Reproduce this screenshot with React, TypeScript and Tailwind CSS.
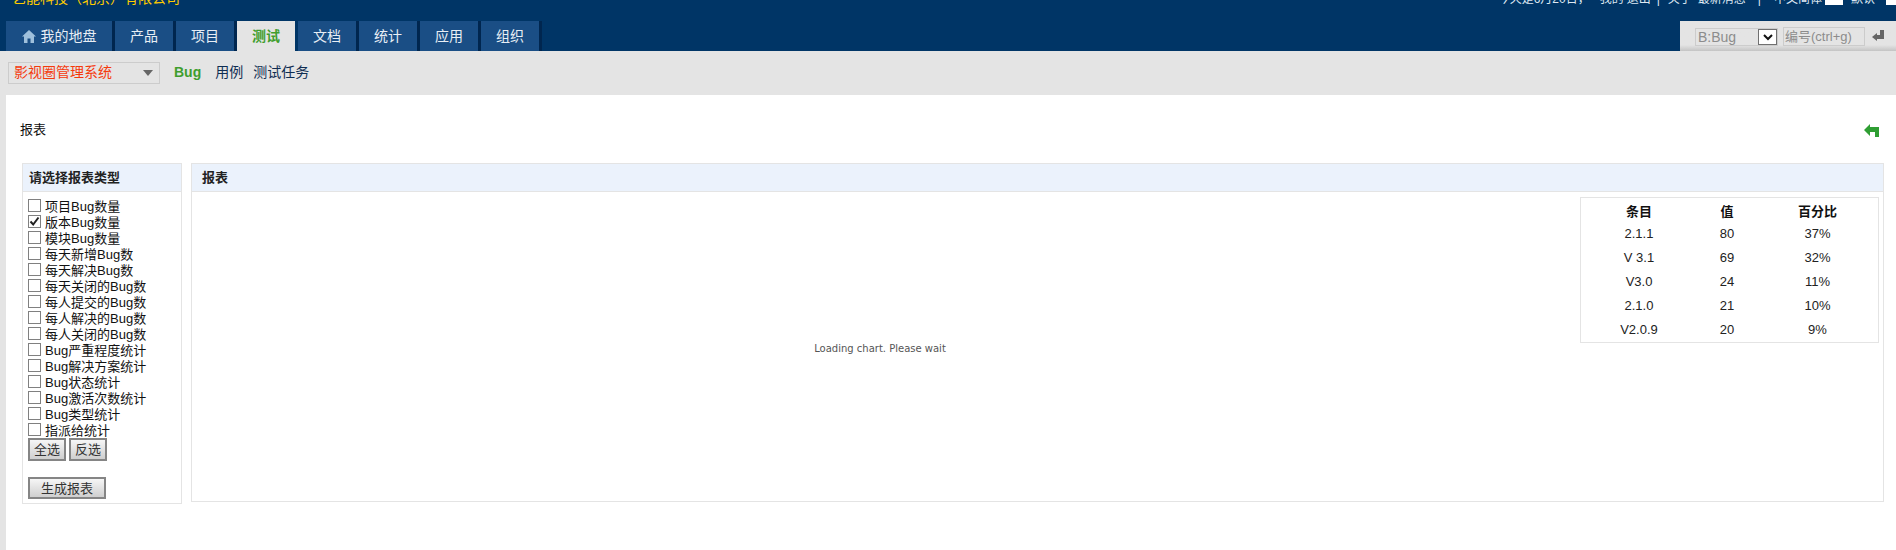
import { Fragment } from "react";

const tabs = ["产品", "项目", "测试", "文档", "统计", "应用", "组织"];

const reportTypes = [
  { label: "项目Bug数量" },
  { label: "版本Bug数量", checked: true },
  { label: "模块Bug数量" },
  { label: "每天新增Bug数" },
  { label: "每天解决Bug数" },
  { label: "每天关闭的Bug数" },
  { label: "每人提交的Bug数" },
  { label: "每人解决的Bug数" },
  { label: "每人关闭的Bug数" },
  { label: "Bug严重程度统计" },
  { label: "Bug解决方案统计" },
  { label: "Bug状态统计" },
  { label: "Bug激活次数统计" },
  { label: "Bug类型统计" },
  { label: "指派给统计" },
];

const rows = [
  ["2.1.1", "80", "37%"],
  ["V 3.1", "69", "32%"],
  ["V3.0", "24", "11%"],
  ["2.1.0", "21", "10%"],
  ["V2.0.9", "20", "9%"],
];

function Checkbox({ checked }: { checked?: boolean }) {
  return (
    <span className="relative block h-[13px] w-[13px] shrink-0 border border-[#808080] bg-white">
      {/* Check mark */}
      {checked && (
        <svg viewBox="0 0 11 11" className="absolute inset-0 h-[11px] w-[11px]">
          <path d="M1.5 5.5 L4.2 8.5 L9.5 1.5" fill="none" stroke="#222" strokeWidth="2" />
        </svg>
      )}
    </span>
  );
}

function GrayButton({ children, className }: { children: string; className: string }) {
  return (
    <button
      className={`border-2 border-[#858585] bg-linear-to-b from-[#f6f6f6] to-[#cfcfcf] text-[13px] leading-none text-[#333] ${className}`}
    >
      {children}
    </button>
  );
}

export default function App() {
  return (
    <div
      className="flex min-h-[550px] flex-col overflow-hidden bg-[#e4e4e4] text-[13px] text-[#222]"
      style={{ fontFamily: '"Liberation Sans", "Noto Sans CJK SC", sans-serif' }}
    >
      <div className="h-[51px] shrink-0 bg-[#003566]">
        <div className="flex h-[21px] justify-between overflow-hidden pl-[12px] leading-[16px]">
          <div className="-mt-[10px] text-[14px] text-[#ffcc00]">艺能科技（北京）有限公司</div>
          <div className="-mt-[9px] flex items-start text-[12px] whitespace-nowrap text-[#dfe8f2]">
            <span>今天是6月20日，</span>
            <span className="ml-[10px]">我的</span>
            <span className="ml-[3px]">退出</span>
            <span className="ml-[6px]">|</span>
            <span className="ml-[8px]">关于</span>
            <span className="ml-[6px]">最新消息</span>
            <span className="ml-[12px]">|</span>
            <span className="ml-[13px]">中文简体</span>
            <span className="mt-[4px] ml-[3px] h-[10px] w-[18px] bg-white" />
            <span className="ml-[8px]">默认</span>
            <span className="mt-[4px] ml-[11px] h-[10px] w-[10px] bg-white" />
          </div>
        </div>

        <div className="flex h-[30px] justify-between">
          {/* Main tabs */}
          <div className="flex pl-[6px] text-[14px] leading-[30px]">
            <div className="flex w-[109px] items-center justify-center gap-[5px] border-r-[3px] border-[#00264f] bg-[#1a4e85] text-[#e8eef5]">
              <svg viewBox="0 0 14 13" className="h-[13px] w-[14px]">
                <path d="M7 0 L14 6.5 H12 V13 H8.5 V8.5 H5.5 V13 H2 V6.5 H0 Z" fill="#9fc0dc" />
              </svg>
              我的地盘
            </div>
            {tabs.map((t) =>
              t === "测试" ? (
                <div key={t} className="mr-[3px] w-[58px] bg-[#e4e4e4] text-center font-bold text-[#3f9e2e]">
                  {t}
                </div>
              ) : (
                <div
                  key={t}
                  className="w-[61px] border-r-[3px] border-[#00264f] bg-[#1a4e85] text-center text-[#e8eef5]"
                >
                  {t}
                </div>
              ),
            )}
          </div>

          {/* Quick search */}
          <div className="flex w-[216px] items-start bg-linear-to-b from-[#e4e4e4] from-80% to-[#c4c4c4] pt-[6px] pl-[15px] text-[#8c8c8c]">
            <div className="mt-[1px] flex h-[18px] w-[83px] items-center justify-between border border-[#ccc] pl-[2px] text-[14px] leading-none">
              B:Bug
              <span className="flex h-[16px] w-[19px] items-center justify-center border border-[#707070] bg-white">
                <svg viewBox="0 0 10 7" className="h-[7px] w-[10px]">
                  <path d="M1 1 L5 5 L9 1" fill="none" stroke="#111" strokeWidth="2" />
                </svg>
              </span>
            </div>
            <div className="ml-[5px] flex h-[19px] w-[82px] items-center border border-[#ccc] pl-[1px] leading-none whitespace-nowrap">
              编号(ctrl+g)
            </div>
            <svg viewBox="0 0 12 11" className="mt-[3px] ml-[7px] h-[11px] w-[12px]">
              <path d="M0 7 L5 3 V5 H8 V0 H12 V9 H5 V11 Z" fill="#666" />
            </svg>
          </div>
        </div>
      </div>

      {/* Sub navigation */}
      <div className="flex h-[44px] shrink-0 items-center pb-[1px] pl-[8px] text-[14px] text-[#0f2d52]">
        <div className="flex h-[22px] w-[152px] items-center justify-between border border-[#ccc] pr-[6px] pl-[5px] text-[#f53a0c]">
          影视圈管理系统
          <span className="h-0 w-0 border-x-[5px] border-t-[6px] border-x-transparent border-t-[#666]" />
        </div>
        <span className="ml-[14px] font-bold text-[#3f9e2e]">Bug</span>
        <span className="ml-[14px]">用例</span>
        <span className="ml-[10px]">测试任务</span>
      </div>

      {/* Content */}
      <div className="ml-[6px] flex-1 bg-white pt-[26px] pr-[12px] pl-[14px]">
        <div className="flex h-[18px] items-center justify-between text-[#111]">
          <span className="text-[13px]">报表</span>
          <svg viewBox="0 0 16 13" className="mr-[4px] h-[13px] w-[16px]">
            <path d="M0 6 L6 0 V3 H15 V13 H11 V8 H6 V12 Z" fill="#2f9e33" />
          </svg>
        </div>

        <div className="mt-[24px] flex items-start gap-[9px] pl-[2px]">
          {/* Report type list */}
          <div className="h-[341px] w-[160px] shrink-0 border border-[#e4e4e4]">
            <div className="flex h-[28px] items-center border-b border-[#e4e4e4] bg-[#ebf2fc] pt-[1px] pl-[6px] font-bold text-[#222]">
              请选择报表类型
            </div>
            <div className="px-[5px] pt-[7px]">
              {reportTypes.map((r) => (
                <div key={r.label} className="flex h-[16px] items-start gap-[4px] leading-[16px] whitespace-nowrap text-[#111]">
                  <Checkbox checked={r.checked} />
                  {r.label}
                </div>
              ))}
              <div className="-mt-[1px] flex gap-[3px]">
                <GrayButton className="h-[23px] w-[38px]">全选</GrayButton>
                <GrayButton className="h-[23px] w-[38px]">反选</GrayButton>
              </div>
              <GrayButton className="mt-[16px] h-[22px] w-[78px]">生成报表</GrayButton>
            </div>
          </div>

          {/* Report panel */}
          <div className="flex h-[339px] flex-1 flex-col border border-[#e4e4e4]">
            <div className="flex h-[28px] shrink-0 items-center border-b border-[#e4e4e4] bg-[#ebf2fc] pt-[1px] pl-[10px] font-bold text-[#222]">
              报表
            </div>
            <div className="flex flex-1 items-start">
              <div
                className="flex h-full flex-1 items-center justify-center pt-[3px] text-[10px] text-[#555]"
                style={{ fontFamily: '"DejaVu Sans", sans-serif' }}
              >
                Loading chart. Please wait
              </div>
              <div className="mt-[5px] mr-[4px] ml-[12px] h-[146px] w-[299px] border border-[#e4e4e4] text-[#222]">
                <div className="grid grid-cols-[116px_60px_1fr] text-center leading-[24px]">
                  {["条目", "值", "百分比"].map((h) => (
                    <div key={h} className="h-[24px] leading-[28px] font-bold text-[#111]">
                      {h}
                    </div>
                  ))}
                  {rows.map((row) => (
                    <Fragment key={row[0]}>
                      {row.map((cell, i) => (
                        <div key={i}>{cell}</div>
                      ))}
                    </Fragment>
                  ))}
                </div>
              </div>
            </div>
          </div>
        </div>
      </div>
    </div>
  );
}
